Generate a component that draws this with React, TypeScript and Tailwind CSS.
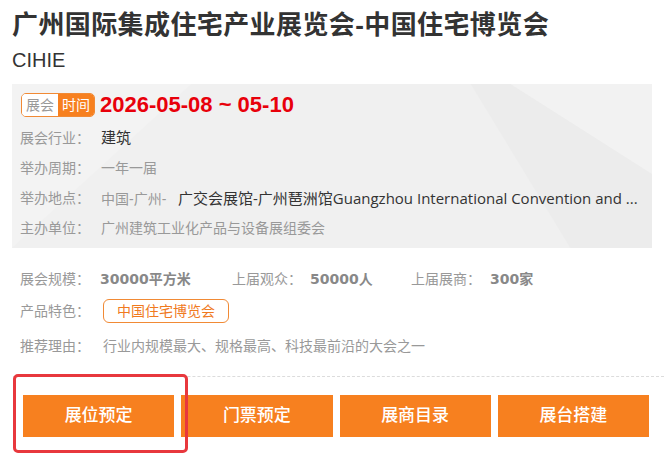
import React from "react";

const F = '"Liberation Sans", "Noto Sans CJK SC", sans-serif';
const W = '"Open Sans", "Noto Sans CJK SC", sans-serif';
const B = '"DejaVu Sans", "Noto Sans CJK SC", sans-serif';

function Row({ label, children }: { label: string; children: React.ReactNode }) {
  return (
    <div className="flex h-[30px] items-center text-[14px]">
      <span className="w-[81px] shrink-0 text-[#999]">{label}</span>
      <span className="whitespace-nowrap">{children}</span>
    </div>
  );
}

export default function App() {
  return (
    <div className="relative h-[464px] w-[664px] overflow-hidden bg-white" style={{ fontFamily: F }}>
      <div className="pl-[12px] pt-[7px]">
        <h1 className="text-[26px] font-bold leading-[36px] tracking-[0.4px] text-[#333]">
          广州国际集成住宅产业展览会-中国住宅博览会
        </h1>
        <div className="mt-[3px] text-[20px] leading-[28px] text-[#333]">CIHIE</div>
      </div>

      <div className="relative mx-[12px] mt-[10px] h-[164px] overflow-hidden bg-[#f0f0f0] pl-[8px] pt-[9px]">
        <svg className="pointer-events-none absolute inset-0 h-full w-full" viewBox="0 0 642 164" preserveAspectRatio="none">
          <polygon points="0,0 180,0 0,164" fill="#f3f3f3" />
          <polygon points="460,0 642,0 642,164 560,164" fill="#ececec" />
          <polygon points="500,0 642,0 642,90" fill="#f2f2f2" />
        </svg>
        <div className="relative">
          <div className="flex h-[24px] items-center">
            <div className="ml-[1px] flex h-[24px] overflow-hidden rounded-[5px] border border-[#f18a35] text-[14px] leading-[22px]">
              <span className="bg-white px-[4px] text-[#999]">展会</span>
              <span className="bg-[#f7801f] px-[4px] text-white">时间</span>
            </div>
            <span className="ml-[5px] text-[22px] font-bold leading-[24px] text-[#e8000b]">2026-05-08 ~ 05-10</span>
          </div>
          <div className="mt-[6px]">
            <Row label="展会行业：">
              <span className="text-[15px] text-[#333]">建筑</span>
            </Row>
            <Row label="举办周期：">
              <span className="text-[#999]">一年一届</span>
            </Row>
            <Row label="举办地点：">
              <span className="inline-block w-[77px] text-[#999]">中国-广州- </span>
              <span className="text-[15px] text-[#333]" style={{ fontFamily: W }}>
                广交会展馆-广州琶洲馆Guangzhou International Convention and ...
              </span>
            </Row>
            <Row label="主办单位：">
              <span className="text-[#999]">广州建筑工业化产品与设备展组委会</span>
            </Row>
          </div>
        </div>
      </div>

      <div className="mt-[16px] pl-[20px] text-[14px]">
        <div className="flex h-[30px] items-center">
          <span className="w-[80px] text-[#999]">展会规模：</span>
          <span className="w-[132px] font-bold text-[#888]" style={{ fontFamily: B }}>30000平方米</span>
          <span className="w-[78px] text-[#999]">上届观众：</span>
          <span className="w-[101px] font-bold text-[#888]" style={{ fontFamily: B }}>50000人</span>
          <span className="w-[79px] text-[#999]">上届展商：</span>
          <span className="font-bold text-[#888]" style={{ fontFamily: B }}>300家</span>
        </div>
        <div className="mt-[2px] flex h-[30px] items-center">
          <span className="w-[83px] text-[#999]">产品特色：</span>
          <span className="flex h-[24px] items-center rounded-[6px] border border-[#f18a35] px-[13px] text-[#f07a1e]">
            中国住宅博览会
          </span>
        </div>
        <div className="mt-[5px] flex h-[30px] items-center">
          <span className="w-[83px] text-[#999]">推荐理由：</span>
          <span className="text-[#999]">行业内规模最大、规格最高、科技最前沿的大会之一</span>
        </div>
      </div>

      <div className="ml-[13px] mt-[15px] border-t border-dashed border-[#dcdcdc]" />

      <div className="ml-[23px] mt-[18px] grid w-[626px] grid-cols-4 gap-[7px]">
        {["展位预定", "门票预定", "展商目录", "展台搭建"].map((t) => (
          <div key={t} className="flex h-[42px] items-center justify-center bg-[#f7801f] text-[17px] font-medium text-white">
            {t}
          </div>
        ))}
      </div>

      <div className="pointer-events-none absolute left-[13px] top-[374px] h-[79px] w-[175px] rounded-[5px] border-[3px] border-[#e8383d]" />
    </div>
  );
}
